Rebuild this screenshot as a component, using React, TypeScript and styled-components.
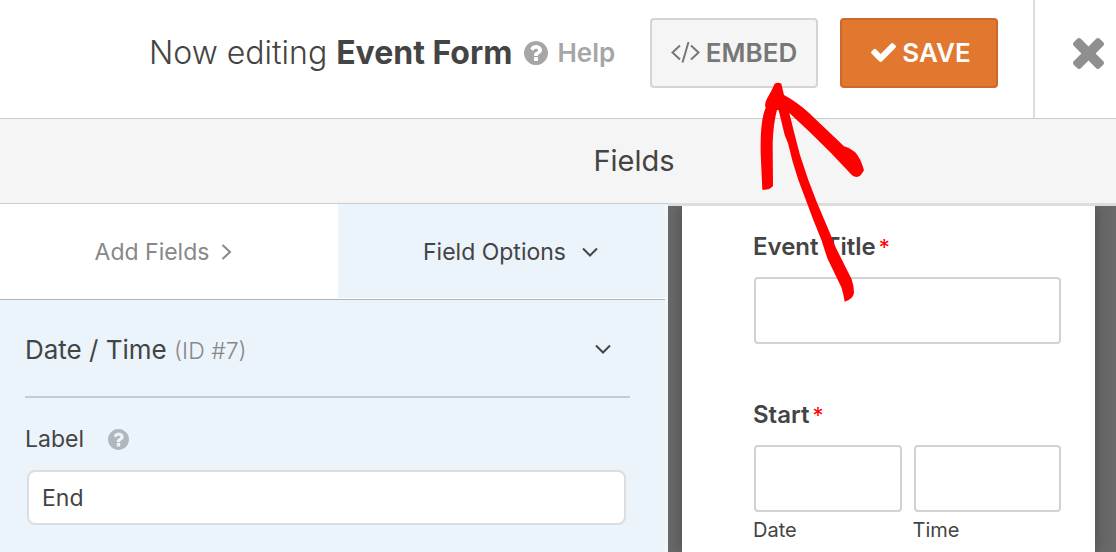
import React from "react";
import styled, { createGlobalStyle } from "styled-components";

const GlobalStyle = createGlobalStyle`
  * { box-sizing: border-box; }
  html, body, #root { height: 100%; }
  body {
    margin: 0;
    background: #fff;
    color: #444;
    font-family: Inter, "Liberation Sans", sans-serif;
  }
  button, input { font-family: inherit; color: inherit; }
`;

const Builder = styled.div`
  display: flex;
  flex-direction: column;
  min-height: 100%;
`;

const Toolbar = styled.header`
  display: flex;
  height: 119px;
  border-bottom: 1px solid #ccc;
  background: #fff;
`;

const ToolbarMain = styled.div`
  flex: 1;
  display: flex;
  align-items: flex-start;
  padding: 18px 35px 0 149px;
`;

const FormName = styled.h1`
  margin: 0;
  font-size: 32px;
  line-height: 70px;
  font-weight: 300;
  white-space: nowrap;

  strong { font-weight: 700; }
`;

const HelpLink = styled.a`
  display: flex;
  align-items: center;
  gap: 9px;
  margin-left: 12px;
  color: #a6a6a6;
  font-size: 26px;
  line-height: 70px;
  font-weight: 600;
  text-decoration: none;
`;

const Actions = styled.div`
  display: flex;
  gap: 22px;
  margin-left: auto;
`;

const EmbedSpot = styled.div`
  position: relative;
`;

const ActionButton = styled.button<{ $primary?: boolean }>`
  display: flex;
  align-items: center;
  justify-content: center;
  gap: 6px;
  width: ${(p) => (p.$primary ? 158 : 168)}px;
  height: 70px;
  padding: ${(p) => (p.$primary ? "0 0 2px 4px" : "0 0 2px")};
  border: 2px solid ${(p) => (p.$primary ? "#d1662c" : "#d4d4d4")};
  border-radius: 4px;
  background: ${(p) => (p.$primary ? "#e27730" : "#f5f5f5")};
  color: ${(p) => (p.$primary ? "#fff" : "#777")};
  font-size: 26px;
  font-weight: 600;
`;

const Arrow = styled.svg`
  position: absolute;
  left: 110px;
  top: 64px;
  z-index: 2;
  pointer-events: none;
`;

const CloseButton = styled.button`
  display: flex;
  align-items: center;
  justify-content: center;
  width: 83px;
  padding: 0 0 12px 25px;
  border: 0;
  border-left: 2px solid #ddd;
  background: none;
  color: #8f8f8f;
`;

const SectionBar = styled.div`
  padding-left: 152px;
  background: #f5f5f5;
  text-align: center;
  font-size: 29px;
  line-height: 84px;
`;

const Workspace = styled.div`
  flex: 1;
  display: grid;
  grid-template-columns: minmax(0, 167fr) minmax(0, 112fr);
`;

const Sidebar = styled.aside`
  display: flex;
  flex-direction: column;
  padding-right: 3px;
  border-top: 1px solid #ccc;
  background: #f5f5f5;
`;

const Tabs = styled.nav`
  display: grid;
  grid-template-columns: 338fr 327fr;
  border-bottom: 1px solid #b0b6bd;
  background: #fff;
`;

const Tab = styled.button<{ $active?: boolean }>`
  display: flex;
  align-items: center;
  justify-content: center;
  gap: ${(p) => (p.$active ? 15 : 12)}px;
  height: 94px;
  margin-bottom: 1px;
  padding: ${(p) => (p.$active ? "2px 0 0 19px" : "2px 11px 0 0")};
  border: 0;
  background: ${(p) => (p.$active ? "#ebf3fb" : "#fff")};
  color: ${(p) => (p.$active ? "#444" : "#888")};
  font-size: 23px;
`;

const OptionsPanel = styled.section`
  flex: 1;
  padding: 0 35px 27px 25px;
  background: #ebf3fb;
`;

const GroupToggle = styled.button`
  display: flex;
  align-items: center;
  justify-content: space-between;
  width: 100%;
  height: 98px;
  padding: 2px 18px 0 0;
  border: 0;
  border-bottom: 2px solid #c3cbd6;
  background: none;
  font-size: 26px;

  small {
    color: #888;
    font-size: 23px;
    font-weight: 300;
  }
`;

const OptionHeading = styled.div`
  display: flex;
  align-items: center;
  gap: 24px;
  padding-top: 23px;
  font-size: 23px;
  line-height: 36px;
`;

const HelpHint = styled.span`
  display: flex;
  color: #b0b7bd;
`;

const OptionInput = styled.input`
  display: block;
  width: calc(100% - 6px);
  height: 55px;
  margin: 13px 4px 0 2px;
  padding: 0 13px;
  border: 2px solid #ddd;
  border-radius: 8px;
  background: #fff;
  font-size: 23px;
`;

const Preview = styled.main`
  display: flex;
  padding: 0 21px 0 14px;
  border-top: 3px solid #ddd;
  background: #696969;
`;

const PreviewPage = styled.div`
  flex: 1;
  min-width: 0;
  padding: 22px 34px 0 71px;
  background: #fff;
  box-shadow: 0 0 14px rgba(0, 0, 0, 0.3);
  clip-path: inset(0 -24px);
`;

const Field = styled.div`
  margin-bottom: 52px;

  &:last-child { margin-bottom: 0; }
`;

const FieldLabel = styled.label`
  display: block;
  font-size: 24px;
  line-height: 38px;
  font-weight: 600;
`;

const Required = styled.span`
  margin-left: 3px;
  color: #f00;
  font-size: 22px;
  font-weight: 400;
`;

const InputRow = styled.div`
  display: flex;
  gap: 12px;
  padding: 11px 0 0 1px;
`;

const SubField = styled.div`
  flex: 1;
  min-width: 0;
`;

const FieldInput = styled.input`
  display: block;
  width: 100%;
  height: 67px;
  padding: 0 12px;
  border: 2px solid #d2d2d2;
  border-radius: 4px;
  background: #fff;
  font-size: 24px;
`;

const SubLabel = styled.label`
  display: block;
  margin-left: -1px;
  font-size: 20px;
  line-height: 36px;
`;

const HelpIcon = ({ size }: { size: number }) => (
  <svg width={size} height={size} viewBox="128 128 1536 1536" fill="currentColor" aria-hidden="true">
    <path d="M1024 1376v-192q0-14-9-23t-23-9h-192q-14 0-23 9t-9 23v192q0 14 9 23t23 9h192q14 0 23-9t9-23zm256-672q0-88-55.500-163t-138.500-116-170-41q-243 0-371 213-15 24 8 42l132 100q7 6 19 6 16 0 25-12 53-68 86-92 34-24 86-24 48 0 85.500 26t37.500 59q0 38-20 61t-68 45q-63 28-115.500 86.500t-52.500 125.500v36q0 14 9 23t23 9h192q14 0 23-9t9-23q0-19 21.500-49.500t54.500-49.500q32-18 49-28.500t46-35 44.500-48 28-60.500 12.500-81zm384 192q0 209-103 385.500t-279.500 279.500-385.500 103-385.500-103-279.500-279.500-103-385.500 103-385.500 279.500-279.500 385.500-103 385.500 103 279.500 279.500 103 385.500z" />
  </svg>
);

const CheckIcon = () => (
  <svg width="25" height="19" viewBox="121 334 1550 1188" fill="currentColor" aria-hidden="true">
    <path d="M1671 566q0 40-28 68l-724 724-136 136q-28 28-68 28t-68-28l-136-136-362-362q-28-28-28-68t28-68l136-136q28-28 68-28t68 28l294 295 656-657q28-28 68-28t68 28l136 136q28 28 28 68z" />
  </svg>
);

const CloseIcon = () => (
  <svg width="31" height="31" viewBox="302 366 1188 1188" fill="currentColor" aria-hidden="true">
    <path d="M1490 1322q0 40-28 68l-136 136q-28 28-68 28t-68-28l-294-294-294 294q-28 28-68 28t-68-28l-136-136q-28-28-28-68t28-68l294-294-294-294q-28-28-28-68t28-68l136-136q28-28 68-28t68 28l294 294 294-294q28-28 68-28t68 28l136 136q28 28 28 68t-28 68l-294 294 294 294q28 28 28 68z" />
  </svg>
);

const CodeIcon = () => (
  <svg width="29" height="22" viewBox="0 0 29 22" fill="none" stroke="currentColor" strokeWidth="2" aria-hidden="true">
    <path d="M9 4.500L1.500 11.500L9 18.500M20 4.500L27.500 11.500L20 18.500M17.500 1L11.500 21.500" />
  </svg>
);

const ChevronRight = () => (
  <svg width="11" height="18" viewBox="0 0 11 18" fill="none" stroke="currentColor" strokeWidth="2" aria-hidden="true">
    <path d="M1.500 2L9 9L1.500 16" />
  </svg>
);

const ChevronDown = () => (
  <svg width="18" height="11" viewBox="0 0 18 11" fill="none" stroke="currentColor" strokeWidth="2" aria-hidden="true">
    <path d="M2 1.500L9 8.500L16 1.500" />
  </svg>
);

const PointerArrow = () => (
  <Arrow width="106" height="221" viewBox="60 246 318 663" fill="#f00" aria-hidden="true">
    <path d="M104 251Q114 246 124 251L132 285Q168 304 204 336L312 439Q330 443 345 456Q362 474 372 511L362 526Q350 536 336 526L273 459Q210 395 148 339L163 400L180 465L205 540L230 605L270 700L287 742L335 838Q342 858 342 879Q338 899 314 905Q310 880 304 862L262 775L245 722L218 655L192 585L175 540L158 485L144 430L134 405L116 331L111 330Q100 370 98 430L99 558Q86 572 67 569L62 460Q60 360 77 324Q72 312 82 294Q94 274 104 251Z" />
  </Arrow>
);

export default function App() {
  return (
    <>
      <GlobalStyle />
      <Builder>
        <Toolbar>
          <ToolbarMain>
            <FormName>
              Now editing <strong>Event Form</strong>
            </FormName>
            <HelpLink href="#help">
              <HelpIcon size={24} />
              Help
            </HelpLink>
            <Actions>
              <EmbedSpot>
                <ActionButton type="button">
                  <CodeIcon />
                  EMBED
                </ActionButton>
                <PointerArrow />
              </EmbedSpot>
              <ActionButton type="button" $primary>
                <CheckIcon />
                SAVE
              </ActionButton>
            </Actions>
          </ToolbarMain>
          <CloseButton type="button" aria-label="Close">
            <CloseIcon />
          </CloseButton>
        </Toolbar>
        <SectionBar>Fields</SectionBar>
        <Workspace>
          <Sidebar>
            <Tabs>
              <Tab type="button">
                Add Fields
                <ChevronRight />
              </Tab>
              <Tab type="button" $active>
                Field Options
                <ChevronDown />
              </Tab>
            </Tabs>
            <OptionsPanel>
              <GroupToggle type="button">
                <span>
                  Date / Time <small>(ID #7)</small>
                </span>
                <ChevronDown />
              </GroupToggle>
              <OptionHeading>
                <label htmlFor="option-label">Label</label>
                <HelpHint>
                  <HelpIcon size={21} />
                </HelpHint>
              </OptionHeading>
              <OptionInput id="option-label" defaultValue="End" />
            </OptionsPanel>
          </Sidebar>
          <Preview>
            <PreviewPage>
              <Field>
                <FieldLabel htmlFor="event-title">
                  Event Title<Required>*</Required>
                </FieldLabel>
                <InputRow>
                  <FieldInput id="event-title" />
                </InputRow>
              </Field>
              <Field role="group" aria-labelledby="start-label">
                <FieldLabel as="div" id="start-label">
                  Start<Required>*</Required>
                </FieldLabel>
                <InputRow>
                  <SubField>
                    <FieldInput id="start-date" />
                    <SubLabel htmlFor="start-date">Date</SubLabel>
                  </SubField>
                  <SubField>
                    <FieldInput id="start-time" />
                    <SubLabel htmlFor="start-time">Time</SubLabel>
                  </SubField>
                </InputRow>
              </Field>
            </PreviewPage>
          </Preview>
        </Workspace>
      </Builder>
    </>
  );
}
